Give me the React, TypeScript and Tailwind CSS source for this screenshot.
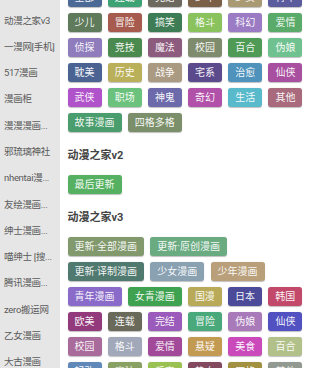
import React from 'react';

type Tag = { name: string; color: string };

// labels as shown in the narrow source column (long names already ellipsized)
const sources = [
  '动漫之家v3',
  '一漫网[手机]',
  '517漫画',
  '漫画柜',
  '漫漫漫画...',
  '邪琉璃神社',
  'nhentai漫...',
  '友绘漫画...',
  '绅士漫画...',
  '喵绅士 [搜...',
  '腾讯漫画...',
  'zero搬运网',
  '乙女漫画',
  '大古漫画',
];

const topTags: Tag[] = [
  { name: '全部', color: 'bg-[#4c6a96]' },
  { name: '连载', color: 'bg-[#3ea374]' },
  { name: '完结', color: 'bg-[#6e695e]' },
  { name: '少年', color: 'bg-[#7b6048]' },
  { name: '少女', color: 'bg-[#a99a73]' },
  { name: '青年', color: 'bg-[#5a5c9e]' },
  { name: '少儿', color: 'bg-[#5f7b5c]' },
  { name: '冒险', color: 'bg-[#a65b4e]' },
  { name: '搞笑', color: 'bg-[#3e7c56]' },
  { name: '格斗', color: 'bg-[#8ac35e]' },
  { name: '科幻', color: 'bg-[#9b7cc4]' },
  { name: '爱情', color: 'bg-[#5aab6a]' },
  { name: '侦探', color: 'bg-[#8e7cbc]' },
  { name: '竞技', color: 'bg-[#4b8a4e]' },
  { name: '魔法', color: 'bg-[#8c5b7e]' },
  { name: '校园', color: 'bg-[#7e8c6d]' },
  { name: '百合', color: 'bg-[#4f9b56]' },
  { name: '伪娘', color: 'bg-[#6fc28f]' },
  { name: '耽美', color: 'bg-[#4b6392]' },
  { name: '历史', color: 'bg-[#bbb05a]' },
  { name: '战争', color: 'bg-[#aa9a82]' },
  { name: '宅系', color: 'bg-[#5b4a8c]' },
  { name: '治愈', color: 'bg-[#4f92bb]' },
  { name: '仙侠', color: 'bg-[#a8509f]' },
  { name: '武侠', color: 'bg-[#b052ca]' },
  { name: '职场', color: 'bg-[#6bc27c]' },
  { name: '神鬼', color: 'bg-[#6c6aab]' },
  { name: '奇幻', color: 'bg-[#b251aa]' },
  { name: '生活', color: 'bg-[#58bacb]' },
  { name: '其他', color: 'bg-[#a86a7c]' },
  { name: '故事漫画', color: 'bg-[#4a9d6c]' },
  { name: '四格多格', color: 'bg-[#7b906a]' },
];

const v2Tags: Tag[] = [{ name: '最后更新', color: 'bg-[#55b161]' }];

const v3Tags: Tag[] = [
  { name: '更新·全部漫画', color: 'bg-[#81996c]' },
  { name: '更新·原创漫画', color: 'bg-[#6aab82]' },
  { name: '更新·译制漫画', color: 'bg-[#50796f]' },
  { name: '少女漫画', color: 'bg-[#8aa1b2]' },
  { name: '少年漫画', color: 'bg-[#b9a07a]' },
  { name: '青年漫画', color: 'bg-[#8a6bc9]' },
  { name: '女青漫画', color: 'bg-[#3fa251]' },
  { name: '国漫', color: 'bg-[#b9aa59]' },
  { name: '日本', color: 'bg-[#4b4b99]' },
  { name: '韩国', color: 'bg-[#c2496a]' },
  { name: '欧美', color: 'bg-[#923a7b]' },
  { name: '连载', color: 'bg-[#6a6a5b]' },
  { name: '完结', color: 'bg-[#9b5bba]' },
  { name: '冒险', color: 'bg-[#49a97a]' },
  { name: '伪娘', color: 'bg-[#a97ab9]' },
  { name: '仙侠', color: 'bg-[#5151c2]' },
  { name: '校园', color: 'bg-[#a96a9c]' },
  { name: '格斗', color: 'bg-[#a1a8b9]' },
  { name: '爱情', color: 'bg-[#a2499a]' },
  { name: '悬疑', color: 'bg-[#c39a52]' },
  { name: '美食', color: 'bg-[#ca4abb]' },
  { name: '百合', color: 'bg-[#b2c18a]' },
  { name: '轻改', color: 'bg-[#6089ba]' },
  { name: '魔法', color: 'bg-[#89a162]' },
  { name: '后宫', color: 'bg-[#9ac252]' },
  { name: '热血', color: 'bg-[#82495f]' },
  { name: '四格', color: 'bg-[#a29141]' },
  { name: '其他', color: 'bg-[#919990]' },
];

const TagList: React.FC<{ tags: Tag[] }> = ({ tags }) => (
  <div className="flex flex-wrap gap-x-[6.2px] gap-y-[6px]">
    {tags.map((t, i) => (
      <span
        key={i}
        className={`flex h-[19px] items-center rounded-[3px] px-[7px] text-[10px] leading-none text-white/95 shadow-[0_0.5px_1px_rgba(0,0,0,0.25)] ${t.color}`}
      >
        {t.name}
      </span>
    ))}
  </div>
);

const Heading: React.FC<{ title: string }> = ({ title }) => (
  <div className="pb-[12px] pt-[17px] text-[11px] font-bold leading-[14px] text-[#444]">{title}</div>
);

export default function App() {
  return (
    <div className="flex h-[368px] w-[320px] overflow-hidden bg-white font-[Roboto,'Noto_Sans_CJK_SC',sans-serif]">
      {/* source list */}
      <aside className="relative z-10 w-[60px] shrink-0 bg-[#e6e6e6] pt-[7.5px]">
        {sources.map((s) => (
          <div key={s} className="flex h-[26.3px] items-center pl-[4px]">
            <span className="whitespace-nowrap text-[9.5px] tracking-[-0.3px] text-[#5a5a5a]">{s}</span>
          </div>
        ))}
      </aside>

      {/* categories */}
      <main className="min-w-0 flex-1 pl-[7.5px] pr-[12px]">
        <div className="-mt-[12px]">
          <TagList tags={topTags} />
        </div>
        <Heading title="动漫之家v2" />
        <TagList tags={v2Tags} />
        <Heading title="动漫之家v3" />
        <TagList tags={v3Tags} />
      </main>
    </div>
  );
}
